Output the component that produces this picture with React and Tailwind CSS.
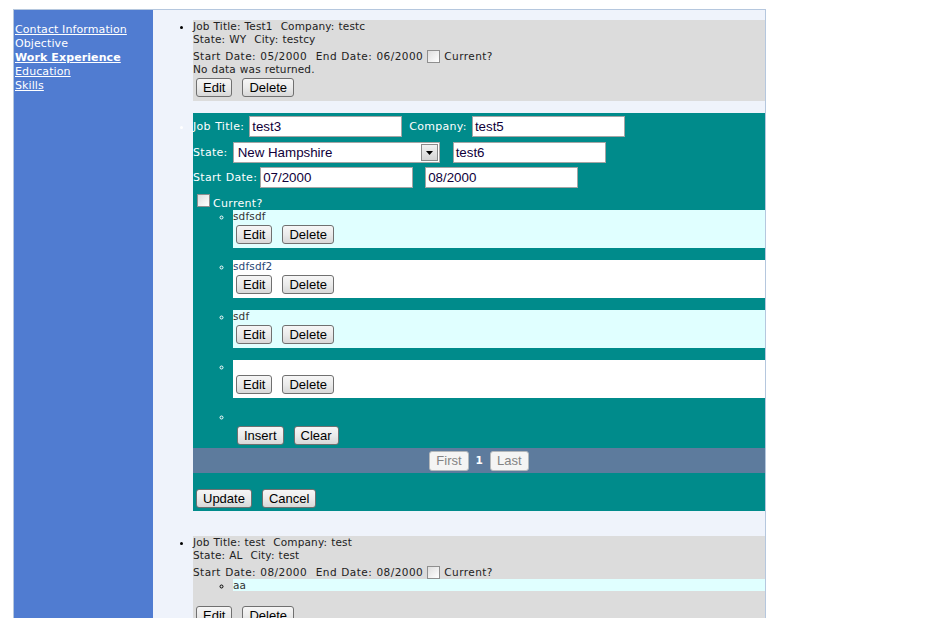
import React from 'react';

const verdana = "font-['DejaVu_Sans',Verdana,sans-serif]";
const arial = "font-['Liberation_Sans',Arial,sans-serif] tracking-normal [word-spacing:0px]";

const Btn = ({ children, className = '' }) => (
    <span className={`inline-flex items-center justify-center h-[19px] px-[6px] rounded-[3px] border border-[#707070] bg-linear-to-b from-[#f6f6f6] via-[#ebebeb] to-[#d8d8d8] ${arial} text-[13px] leading-none text-black ${className}`}>
        {children}
    </span>
);

const PagerBtn = ({ children }) => (
    <span className={`inline-flex items-center justify-center h-[20px] px-[6px] rounded-[3px] border border-[#b4b8bb] bg-[#f4f4f4] ${arial} text-[13px] leading-none text-[#838383]`}>
        {children}
    </span>
);

const Check = () => (
    <span className="inline-block w-[13px] h-[13px] border border-[#8f8f8f] bg-linear-to-br from-[#dedede] to-white" />
);

const Field = ({ value, width }) => (
    <span className={`inline-flex items-center h-[21px] ${width} border border-[#a5a5a5] bg-white px-[2px] ${arial} text-[13.33px] text-[#10003a]`}>
        {value}
    </span>
);

const Label = ({ children }) => (
    <span className={`${verdana} text-[11px] tracking-[0.3px] text-white`}>{children}</span>
);

const EditButtons = () => (
    <div className="flex gap-[10px] ml-[3px] mt-[3px]">
        <Btn>Edit</Btn>
        <Btn>Delete</Btn>
    </div>
);

const SubItem = ({ text, alt }) => (
    <li
        className={`h-[38px] ${alt ? 'bg-white text-[#284775] marker:text-[#284775]' : 'bg-[#e0ffff] text-[#333333] marker:text-[#333333]'}`}
    >
        <div className="h-[12px] leading-[12px]">{text}</div>
        <EditButtons />
    </li>
);

const App = () => {
    return (
        <div className="min-h-[618px] bg-white pt-[9px] pl-[13px]">
            <div className="flex w-[753px] h-[640px] border border-[#b5c7de] overflow-hidden">
                {/* side menu */}
                <div className={`w-[139px] shrink-0 bg-[#507cd1] pt-[13px] pl-[1px] ${verdana} text-[11px] leading-[14px] tracking-[0.1px] text-white`}>
                    <div className="underline">Contact Information</div>
                    <div>Objective</div>
                    <div className="underline font-bold">Work Experience</div>
                    <div className="underline">Education</div>
                    <div className="underline">Skills</div>
                </div>

                {/* job list */}
                <div className={`flex-1 bg-[#eff3fb] ${verdana} text-[10.5px] leading-[13px] tracking-[0.15px] [word-spacing:0.5px] text-[#222]`}>
                    <ul className="list-disc pl-[40px] mt-[10px]">
                        <li className="bg-[#dcdcdc] pb-[4px] marker:text-black">
                            <div>Job Title: Test1&nbsp;&nbsp;Company: testc</div>
                            <div>State: WY&nbsp;&nbsp;City: testcy</div>
                            <div className="flex items-center gap-[4px] h-[14px] mt-[3px]">
                                <span className="tracking-[0.45px]">Start Date: 05/2000&nbsp;&nbsp;End Date: 06/2000</span>
                                <Check />
                                <span className="tracking-[0.45px]">Current?</span>
                            </div>
                            <div>No data was returned.</div>
                            <div className="flex gap-[10px] ml-[3px] mt-[2px]">
                                <Btn>Edit</Btn>
                                <Btn>Delete</Btn>
                            </div>
                        </li>

                        <li className="mt-[12px] bg-[#008b8b] marker:text-white">
                            <div className="flex items-center pt-[3px]">
                                <Label>Job Title:</Label>
                                <span className="ml-[5px]">
                                    <Field value="test3" width="w-[153px]" />
                                </span>
                                <span className="ml-[7px]">
                                    <Label>Company:</Label>
                                </span>
                                <span className="ml-[5px]">
                                    <Field value="test5" width="w-[153px]" />
                                </span>
                            </div>
                            <div className="flex items-center mt-[5px]">
                                <Label>State:</Label>
                                <span className={`ml-[5px] flex items-center justify-between h-[21px] w-[207px] border border-[#a5a5a5] bg-white pl-[4px] pr-[1px] ${arial} text-[13.33px] text-[#10003a]`}>
                                    New Hampshire
                                    <span className="flex items-center justify-center w-[17px] h-[17px] border border-[#8a8a8a] bg-linear-to-b from-[#f2f2f2] to-[#d4d4d4]">
                                        <svg width="7" height="4" viewBox="0 0 7 4">
                                            <path d="M0 0h7L3.5 4z" fill="#000" />
                                        </svg>
                                    </span>
                                </span>
                                <span className="ml-[13px]">
                                    <Field value="test6" width="w-[153px]" />
                                </span>
                            </div>
                            <div className="flex items-center mt-[4px]">
                                <Label>Start Date:</Label>
                                <span className="ml-[3px]">
                                    <Field value="07/2000" width="w-[153px]" />
                                </span>
                                <span className="ml-[12px]">
                                    <Field value="08/2000" width="w-[153px]" />
                                </span>
                            </div>
                            <div className="flex items-end gap-[3px] h-[22px] pl-[4px]">
                                <span className="mb-[0px]"><Check /></span>
                                <Label>Current?</Label>
                            </div>

                            <ul className="list-[circle] pl-[40px]">
                                <SubItem text="sdfsdf" />
                                <div className="h-[12px]" />
                                <SubItem text="sdfsdf2" alt />
                                <div className="h-[12px]" />
                                <SubItem text="sdf" />
                                <div className="h-[12px]" />
                                <SubItem text={'\u00a0'} alt />
                                <div className="h-[12px]" />
                                <li className="h-[38px] marker:text-[#d8e8e8]">
                                    <div className="h-[12px]">&nbsp;</div>
                                    <div className="flex gap-[10px] ml-[4px] mt-[4px]">
                                        <Btn className="px-[5px]">Insert</Btn>
                                        <Btn className="px-[5px]">Clear</Btn>
                                    </div>
                                </li>
                            </ul>

                            <div className="flex items-center justify-center gap-[7px] h-[25px] bg-[#5d7b9d]">
                                <PagerBtn>First</PagerBtn>
                                <span className="font-bold text-white">1</span>
                                <PagerBtn>Last</PagerBtn>
                            </div>

                            <div className="flex gap-[10px] ml-[3px] mt-[16px] pb-[3px]">
                                <Btn className="px-[5px]">Update</Btn>
                                <Btn className="px-[5px]">Cancel</Btn>
                            </div>
                        </li>

                        <li className="mt-[25px] bg-[#dcdcdc] pb-[4px] marker:text-black">
                            <div>Job Title: test&nbsp;&nbsp;Company: test</div>
                            <div>State: AL&nbsp;&nbsp;City: test</div>
                            <div className="flex items-center gap-[4px] h-[14px] mt-[3px]">
                                <span className="tracking-[0.45px]">Start Date: 08/2000&nbsp;&nbsp;End Date: 08/2000</span>
                                <Check />
                                <span className="tracking-[0.45px]">Current?</span>
                            </div>
                            <ul className="list-[circle] pl-[40px]">
                                <li className="h-[12px] leading-[12px] bg-[#e0ffff] text-[#333333] marker:text-[#333333]">aa</li>
                            </ul>
                            <div className="flex gap-[10px] ml-[3px] mt-[15px]">
                                <Btn>Edit</Btn>
                                <Btn>Delete</Btn>
                            </div>
                        </li>
                    </ul>
                </div>
            </div>
        </div>
    );
};

export default App;
